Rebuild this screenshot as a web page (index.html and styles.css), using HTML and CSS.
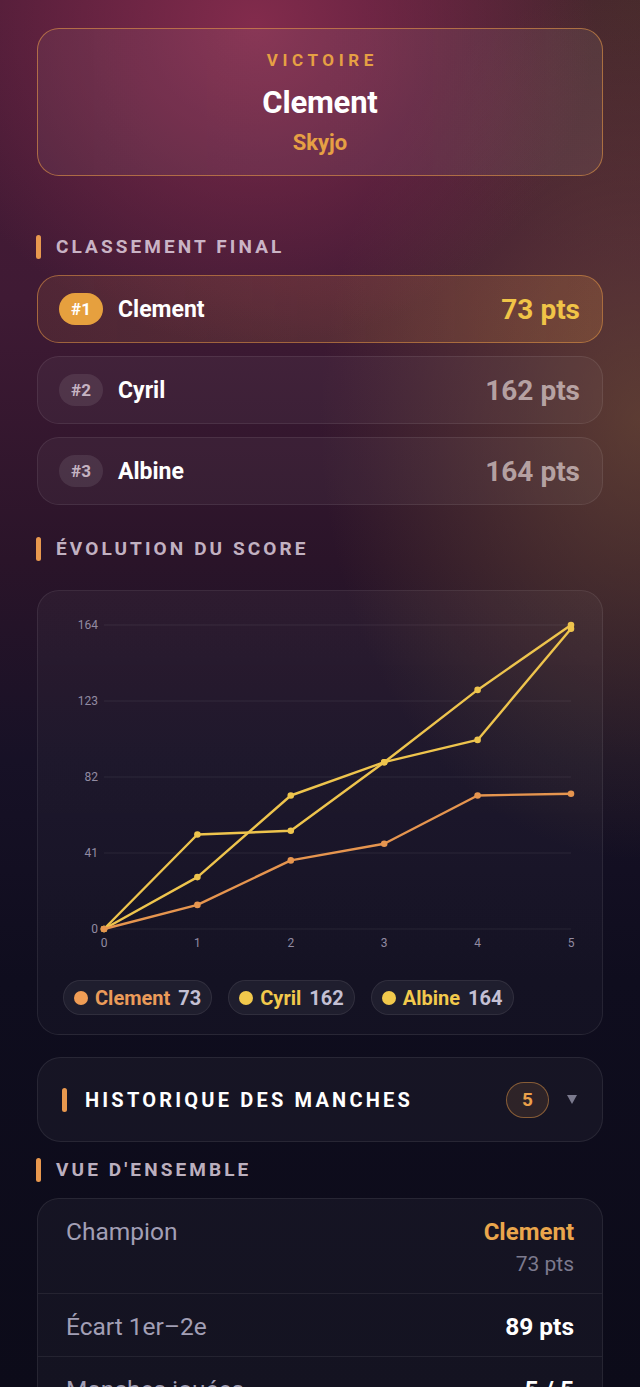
FILE: index.html
```html
<!DOCTYPE html>
<html lang="fr">
<head>
<meta charset="utf-8">
<title>Skyjo - Résultats</title>
<link rel="stylesheet" href="styles.css">
</head>
<body>
<main class="page">
  <section class="hero">
    <div class="hero-label">VICTOIRE</div>
    <div class="hero-name">Clement</div>
    <div class="hero-game">Skyjo</div>
  </section>

  <h2 class="section-title title-ranking">CLASSEMENT FINAL</h2>
  <div class="ranking">
    <div class="rank-row first">
      <span class="rank-badge">#1</span>
      <span class="rank-name">Clement</span>
      <span class="rank-score">73 pts</span>
    </div>
    <div class="rank-row">
      <span class="rank-badge">#2</span>
      <span class="rank-name">Cyril</span>
      <span class="rank-score">162 pts</span>
    </div>
    <div class="rank-row">
      <span class="rank-badge">#3</span>
      <span class="rank-name">Albine</span>
      <span class="rank-score">164 pts</span>
    </div>
  </div>

  <h2 class="section-title title-evolution">ÉVOLUTION DU SCORE</h2>
  <div class="chart-card">
    <svg class="chart" viewBox="0 0 564 370" width="564" height="370">
      <g class="grid">
        <line x1="66" y1="34" x2="533" y2="34"/>
        <line x1="66" y1="110" x2="533" y2="110"/>
        <line x1="66" y1="186" x2="533" y2="186"/>
        <line x1="66" y1="262" x2="533" y2="262"/>
        <line x1="66" y1="338" x2="533" y2="338"/>
      </g>
      <g class="ylabels">
        <text x="60" y="38">164</text>
        <text x="60" y="114">123</text>
        <text x="60" y="190">82</text>
        <text x="60" y="266">41</text>
        <text x="60" y="342">0</text>
      </g>
      <g class="xlabels">
        <text x="66" y="356">0</text>
        <text x="159.4" y="356">1</text>
        <text x="252.8" y="356">2</text>
        <text x="346.2" y="356">3</text>
        <text x="439.6" y="356">4</text>
        <text x="533" y="356">5</text>
      </g>
      <g class="series yellow">
        <polyline points="66,338 159.4,286.1 252.8,204.5 346.2,171.2 439.6,98.9 533,34"/>
        <circle cx="66" cy="338" r="3.3"/><circle cx="159.4" cy="286.1" r="3.3"/><circle cx="252.8" cy="204.5" r="3.3"/><circle cx="346.2" cy="171.2" r="3.3"/><circle cx="439.6" cy="98.9" r="3.3"/><circle cx="533" cy="34" r="3.3"/>
      </g>
      <g class="series yellow">
        <polyline points="66,338 159.4,243.5 252.8,239.8 346.2,171.2 439.6,148.9 533,37.7"/>
        <circle cx="66" cy="338" r="3.3"/><circle cx="159.4" cy="243.5" r="3.3"/><circle cx="252.8" cy="239.8" r="3.3"/><circle cx="346.2" cy="171.2" r="3.3"/><circle cx="439.6" cy="148.9" r="3.3"/><circle cx="533" cy="37.7" r="3.3"/>
      </g>
      <g class="series orange">
        <polyline points="66,338 159.4,313.9 252.8,269.4 346.2,252.7 439.6,204.5 533,202.7"/>
        <circle cx="66" cy="338" r="3.3"/><circle cx="159.4" cy="313.9" r="3.3"/><circle cx="252.8" cy="269.4" r="3.3"/><circle cx="346.2" cy="252.7" r="3.3"/><circle cx="439.6" cy="204.5" r="3.3"/><circle cx="533" cy="202.7" r="3.3"/>
      </g>
    </svg>
    <div class="legend">
      <span class="legend-pill"><span class="dot dot-orange"></span><span class="legend-name name-orange">Clement</span><span class="legend-score">73</span></span>
      <span class="legend-pill"><span class="dot dot-yellow"></span><span class="legend-name name-yellow">Cyril</span><span class="legend-score">162</span></span>
      <span class="legend-pill"><span class="dot dot-yellow"></span><span class="legend-name name-yellow">Albine</span><span class="legend-score">164</span></span>
    </div>
  </div>

  <div class="history-card">
    <span class="history-bar"></span>
    <span class="history-title">HISTORIQUE DES MANCHES</span>
    <span class="history-count">5</span>
    <svg class="caret" viewBox="0 0 10 9" width="10" height="9"><polygon points="0,0 10,0 5,9"/></svg>
  </div>

  <h2 class="section-title title-overview">VUE D'ENSEMBLE</h2>
  <div class="overview">
    <div class="ov-row ov-first">
      <span class="ov-label">Champion</span>
      <div class="ov-value">
        <div class="ov-champ">Clement</div>
        <div class="ov-sub">73 pts</div>
      </div>
    </div>
    <div class="ov-row">
      <span class="ov-label">Écart 1er–2e</span>
      <span class="ov-strong">89 pts</span>
    </div>
    <div class="ov-row">
      <span class="ov-label">Manches jouées</span>
      <span class="ov-strong">5 / 5</span>
    </div>
    <div class="ov-row">
      <span class="ov-label">Meilleure manche</span>
      <span class="ov-strong">Clement</span>
    </div>
  </div>
</main>
</body>
</html>
```

FILE: styles.css
```css
* {
  box-sizing: border-box;
  margin: 0;
  padding: 0;
}

html {
  background: #0d0c1a;
}

body {
  font-family: Roboto, "Noto Sans", sans-serif;
  color: #ffffff;
  min-height: 1387px;
  background-color: #0d0c1a;
  background-image:
    radial-gradient(ellipse 340px 320px at 255px 25px, rgba(140, 46, 80, 0.85), rgba(140, 46, 80, 0) 100%),
    radial-gradient(ellipse 320px 440px at 640px 420px, rgba(118, 84, 54, 0.6), rgba(118, 84, 54, 0) 100%),
    radial-gradient(ellipse 280px 260px at 640px 0px, rgba(70, 48, 40, 0.7), rgba(70, 48, 40, 0) 100%),
    linear-gradient(180deg, #4a1b36 0px, #3f1a34 300px, #2a1429 560px, #171126 760px, #0f0d1e 980px, #0c0b19 1387px);
  background-repeat: no-repeat;
}

.page {
  padding: 28px 37px 0;
  display: flex;
  flex-direction: column;
}

/* Hero */
.hero {
  height: 148px;
  border: 1px solid rgba(226, 150, 70, 0.6);
  border-radius: 22px;
  background: linear-gradient(90deg, rgba(255, 255, 255, 0.05), rgba(255, 255, 255, 0.07));
  display: flex;
  flex-direction: column;
  align-items: center;
  padding-top: 19px;
}

.hero-label {
  font-size: 17px;
  line-height: 24px;
  font-weight: 700;
  letter-spacing: 4.6px;
  padding-left: 4.6px;
  color: #e6a044;
}

.hero-name {
  margin-top: 13px;
  font-size: 31px;
  line-height: 36px;
  font-weight: 700;
  color: #ffffff;
  letter-spacing: -0.2px;
}

.hero-game {
  margin-top: 8px;
  font-size: 22px;
  line-height: 28px;
  font-weight: 700;
  color: #e6a044;
}

/* Section titles */
.section-title {
  display: flex;
  align-items: center;
  gap: 15px;
  margin-left: -1px;
  height: 24px;
  font-size: 19px;
  line-height: 24px;
  font-weight: 700;
  letter-spacing: 3.1px;
  color: rgba(236, 222, 236, 0.8);
}

.section-title::before {
  content: "";
  width: 5px;
  height: 24px;
  border-radius: 3px;
  background: #e8984e;
}

.title-ranking {
  margin-top: 59px;
  margin-bottom: 16px;
}

.title-evolution {
  margin-top: 32px;
  margin-bottom: 29px;
}

.title-overview {
  margin-top: 16px;
  margin-bottom: 16px;
}

/* Ranking */
.ranking {
  display: flex;
  flex-direction: column;
  gap: 13px;
}

.rank-row {
  height: 68px;
  border-radius: 22px;
  border: 1px solid rgba(255, 255, 255, 0.08);
  background: rgba(255, 255, 255, 0.04);
  display: flex;
  align-items: center;
  padding: 0 22px 0 21px;
}

.rank-row.first {
  border-color: rgba(226, 150, 70, 0.55);
  background: linear-gradient(90deg, rgba(232, 150, 74, 0.10), rgba(232, 150, 74, 0.2));
}

.rank-badge {
  width: 44px;
  height: 32px;
  border-radius: 16px;
  background: rgba(255, 255, 255, 0.09);
  color: rgba(230, 215, 228, 0.8);
  font-size: 17px;
  font-weight: 700;
  display: flex;
  align-items: center;
  justify-content: center;
}

.first .rank-badge {
  background: #e6a03e;
  color: #ffffff;
}

.rank-name {
  margin-left: 15px;
  font-size: 23px;
  font-weight: 700;
  color: #ffffff;
  flex: 1;
}

.rank-score {
  font-size: 28px;
  font-weight: 700;
  color: rgba(225, 210, 210, 0.7);
}

.first .rank-score {
  color: #f0c447;
}

/* Chart */
.chart-card {
  height: 445px;
  border-radius: 22px;
  border: 1px solid rgba(255, 255, 255, 0.08);
  background: linear-gradient(180deg, rgba(255, 255, 255, 0.035), rgba(255, 255, 255, 0.025));
  display: flex;
  flex-direction: column;
}

.chart {
  display: block;
}

.grid line {
  stroke: rgba(255, 255, 255, 0.07);
  stroke-width: 1;
}

.ylabels text,
.xlabels text {
  font-family: Roboto, sans-serif;
  font-size: 12px;
  fill: #928ba2;
}

.ylabels text {
  text-anchor: end;
}

.xlabels text {
  text-anchor: middle;
}

.series polyline {
  fill: none;
  stroke-width: 2.4;
  stroke-linejoin: round;
}

.series.yellow polyline {
  stroke: #eec44d;
}

.series.yellow circle {
  fill: #eec44d;
}

.series.orange polyline {
  stroke: #e6954f;
}

.series.orange circle {
  fill: #e6954f;
}

.legend {
  margin-top: 19px;
  padding-left: 25px;
  display: flex;
  gap: 16px;
}

.legend-pill {
  height: 35px;
  border-radius: 18px;
  border: 1px solid rgba(255, 255, 255, 0.08);
  background: rgba(255, 255, 255, 0.05);
  display: flex;
  align-items: center;
  padding: 0 10px;
  font-size: 20px;
  font-weight: 700;
}

.dot {
  width: 14px;
  height: 14px;
  border-radius: 50%;
  margin-right: 7px;
}

.dot-orange {
  background: #f09d55;
}

.dot-yellow {
  background: #f2c94c;
}

.name-orange {
  color: #eb9b59;
}

.name-yellow {
  color: #f2c94c;
}

.legend-score {
  margin-left: 8px;
  color: #c4c0d4;
}

/* History */
.history-card {
  margin-top: 22px;
  height: 85px;
  border-radius: 24px;
  border: 1px solid rgba(255, 255, 255, 0.08);
  background: rgba(255, 255, 255, 0.035);
  display: flex;
  align-items: center;
  padding: 0 25px 0 24px;
}

.history-bar {
  width: 5px;
  height: 24px;
  border-radius: 3px;
  background: #e8984e;
}

.history-title {
  margin-left: 18px;
  flex: 1;
  font-size: 20px;
  font-weight: 700;
  letter-spacing: 3.2px;
  color: #ffffff;
}

.history-count {
  width: 43px;
  height: 36px;
  border-radius: 18px;
  border: 1px solid rgba(226, 150, 70, 0.5);
  background: rgba(226, 150, 70, 0.12);
  color: #eba04a;
  font-size: 19px;
  font-weight: 700;
  display: flex;
  align-items: center;
  justify-content: center;
}

.caret {
  margin-left: 18px;
  fill: #7b7a8e;
}

/* Overview */
.overview {
  border-radius: 22px;
  border: 1px solid rgba(255, 255, 255, 0.08);
  background: rgba(255, 255, 255, 0.035);
}

.ov-row {
  display: flex;
  justify-content: space-between;
  align-items: flex-start;
  padding: 16px 28px 12px;
  border-top: 1px solid rgba(255, 255, 255, 0.07);
}

.ov-row.ov-first {
  border-top: none;
  padding: 16px 28px 14px;
}

.ov-label {
  font-size: 24.5px;
  line-height: 34px;
  color: #a29fb5;
}

.ov-value {
  text-align: right;
}

.ov-champ {
  font-size: 24px;
  line-height: 34px;
  font-weight: 700;
  color: #eaa64c;
}

.ov-sub {
  font-size: 21px;
  line-height: 30px;
  color: #7c7a8e;
}

.ov-strong {
  font-size: 24.5px;
  line-height: 34px;
  font-weight: 700;
  color: #ffffff;
}
```
